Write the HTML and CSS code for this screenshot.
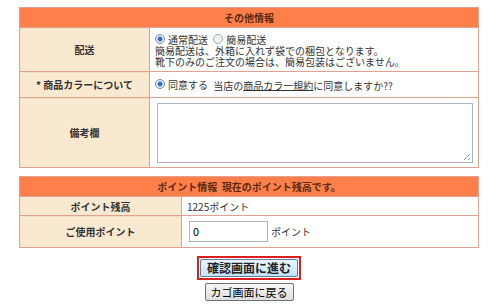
FILE: index.html
```html
<!DOCTYPE html>
<html lang="ja">
<head>
  <meta charset="UTF-8">
  <title>注文確認</title>
  <link rel="stylesheet" href="styles.css">
</head>
<body>

  <div class="wrap">
    <table class="form-table">
      <tr>
        <th colspan="2" class="head">その他情報</th>
      </tr>
      <tr class="row-ship">
        <th class="label">配送</th>
        <td class="value">
          <div class="line">
            <label class="radio"><span class="dot on"></span>通常配送</label>
            <label class="radio"><span class="dot"></span>簡易配送</label>
          </div>
          <div class="line">簡易配送は、外箱に入れず袋での梱包となります。</div>
          <div class="line">靴下のみのご注文の場合は、簡易包装はございません。</div>
        </td>
      </tr>
      <tr class="row-color">
        <th class="label">* 商品カラーについて</th>
        <td class="value">
          <label class="radio"><span class="dot on"></span>同意する</label>
          当店の<a href="#" class="link">商品カラー規約</a>に同意しますか??
        </td>
      </tr>
      <tr class="row-note">
        <th class="label">備考欄</th>
        <td class="value">
          <div class="textarea"><span class="grip"></span></div>
        </td>
      </tr>
    </table>

    <table class="form-table points">
      <tr>
        <th colspan="2" class="head">ポイント情報&nbsp;&nbsp;現在のポイント残高です。</th>
      </tr>
      <tr class="row-balance">
        <th class="label">ポイント残高</th>
        <td class="value">1225ポイント</td>
      </tr>
      <tr class="row-use">
        <th class="label">ご使用ポイント</th>
        <td class="value">
          <div class="use-field">
            <span class="input">0</span>
            <span>ポイント</span>
          </div>
        </td>
      </tr>
    </table>

    <div class="actions">
      <div class="primary-frame">
        <button class="btn btn-primary">確認画面に進む</button>
      </div>
      <button class="btn btn-back">カゴ画面に戻る</button>
    </div>
  </div>

</body>
</html>
```

FILE: styles.css
```css
html, body {
  margin: 0;
  background: #ffffff;
  font-family: "Noto Sans CJK JP", "DejaVu Sans", sans-serif;
  font-size: 10px;
  color: #333333;
}

.wrap {
  width: 460px;
  padding: 7px 0 0 19px;
}

.form-table {
  width: 460px;
  border-collapse: collapse;
  border: 1px solid #c9907a;
}

.form-table th,
.form-table td {
  border: 1px solid #e3a190;
  padding: 0;
}

.head {
  height: 19px;
  background: #ff7f4a;
  color: #5a2a10;
  font-size: 10px;
  font-weight: bold;
  text-align: center;
  line-height: 19px;
}

.label {
  width: 131px;
  background: repeating-linear-gradient(to bottom, #f4dfbd 0, #f4dfbd 1px, #fcf3e3 1px, #fcf3e3 2px);
  color: #333333;
  font-weight: bold;
  font-size: 10px;
  text-align: center;
}

.points .label {
  width: 161px;
}

.value {
  background: #ffffff;
  padding: 0 5px !important;
  line-height: 11px;
  text-align: left;
  vertical-align: middle;
}

.row-ship { height: 44px; }
.row-color { height: 26px; }
.row-note { height: 70px; }
.row-balance { height: 19px; }
.row-use { height: 32px; }

.row-ship .value {
  padding-top: 1px !important;
}

.line {
  height: 11px;
  line-height: 11px;
  white-space: nowrap;
}

.radio {
  display: inline-flex;
  align-items: center;
  margin-right: 3px;
}

.dot {
  display: inline-block;
  width: 10px;
  height: 10px;
  margin-right: 3px;
  border-radius: 50%;
  border: 1px solid #9aa7b4;
  background: #f2f2f2;
  box-sizing: border-box;
}

.dot.on {
  background: radial-gradient(circle, #2a58a8 0, #3f74c8 2px, #e8f0fb 3px);
  border-color: #6d8fba;
}

.link {
  color: #333333;
  text-decoration: underline;
}

.textarea {
  position: relative;
  width: 314px;
  height: 58px;
  margin: 4px 0 4px 2px;
  border: 1px solid #a9b4bd;
  background: #ffffff;
}

.grip {
  position: absolute;
  right: 2px;
  bottom: 2px;
  width: 6px;
  height: 6px;
  background: linear-gradient(135deg, transparent 45%, #999 45%, #999 55%, transparent 55%, transparent 75%, #999 75%, #999 85%, transparent 85%);
}

.points {
  margin-top: 8px;
}

.use-field {
  display: flex;
  align-items: center;
  gap: 3px;
}

.input {
  display: inline-block;
  width: 74px;
  height: 19px;
  margin-left: 2px;
  padding-left: 3px;
  line-height: 19px;
  border: 1px solid #a9b4bd;
  color: #000000;
  font-size: 11px;
}

.actions {
  display: flex;
  flex-direction: column;
  align-items: center;
  gap: 3px;
  margin-top: 8px;
}

.primary-frame {
  border: 2px solid #d8201e;
  padding: 1px;
}

.btn {
  font-family: "Noto Sans CJK JP", "DejaVu Sans", sans-serif;
  line-height: 14px;
  padding: 1px 6px;
  border-radius: 2px;
  color: #000000;
  white-space: nowrap;
  cursor: pointer;
}

.btn-primary {
  font-size: 12px;
  border: 1px solid #5a7fa0;
  background: linear-gradient(to bottom, #eaf6fd, #c4e3f6);
  font-weight: bold;
  color: #222222;
}

.btn-back {
  font-size: 11px;
  padding: 1px 5px;
  border: 1px solid #707070;
  background: linear-gradient(to bottom, #f6f6f6, #dedede);
}
```
